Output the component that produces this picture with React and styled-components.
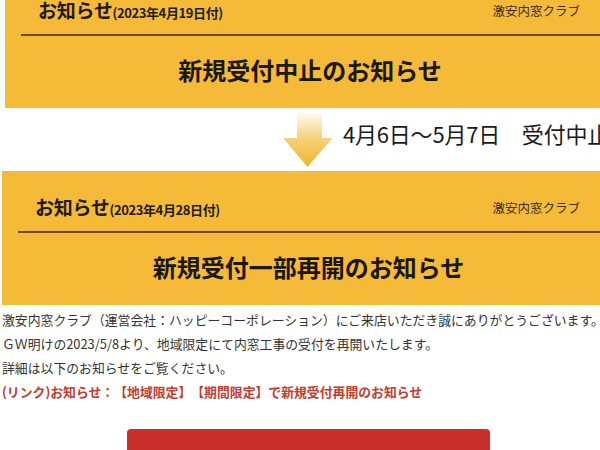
import React from "react";
import styled, { createGlobalStyle } from "styled-components";

const GlobalStyle = createGlobalStyle`
  html, body {
    margin: 0;
    padding: 0;
    background: #fff;
    overflow: hidden;
  }
  body {
    width: 600px;
    height: 450px;
    font-family: "Noto Sans CJK JP", "Noto Sans", sans-serif;
    color: #222;
    text-spacing-trim: space-all;
  }
`;

const Page = styled.div`
  width: 600px;
  height: 450px;
  overflow: hidden;
`;

const Panel = styled.section`
  margin-left: ${(p) => p.$inset}px;
  margin-top: ${(p) => p.$top || 0}px;
  height: 134px;
  background: #f5ba37;
  box-sizing: border-box;
  padding-top: 27px;
`;

const PanelHead = styled.div`
  display: flex;
  justify-content: space-between;
  align-items: center;
  height: 20px;
  padding: 0 20px 0 33px;
`;

const HeadTitle = styled.div`
  font-size: 19px;
  font-weight: 700;
  color: #1e1a12;
  line-height: 20px;
  letter-spacing: -0.3px;
  small {
    font-size: 13px;
    letter-spacing: -0.4px;
  }
`;

const Club = styled.div`
  font-size: 12.5px;
  color: #3a3020;
  line-height: 20px;
`;

const Rule = styled.hr`
  margin: 13px 0 0 16px;
  border: none;
  border-top: 2px solid #6a4c10;
  height: 0;
`;

const Notice = styled.h2`
  margin: 19px 0 0;
  padding-left: 15px;
  text-align: center;
  font-size: 24px;
  line-height: 30px;
  font-weight: 700;
  color: #1a1710;
  white-space: nowrap;
`;

const Between = styled.div`
  display: flex;
  align-items: flex-start;
  gap: 10px;
  height: 63px;
  padding-left: 283px;
  box-sizing: border-box;
  white-space: nowrap;
  overflow: hidden;
`;

const ArrowSvg = styled.svg`
  flex-shrink: 0;
  margin-top: 5px;
`;

const Period = styled.div`
  flex-shrink: 0;
  margin-top: 11px;
  font-size: 22px;
  line-height: 28px;
  color: #1b1b1b;
  letter-spacing: -0.2px;
`;

const Body = styled.div`
  padding: 3px 0 0 2px;
  font-size: 12.85px;
  line-height: 24px;
  color: #333;
  white-space: nowrap;
`;

const Line = styled.p`
  margin: 0;
  color: ${(p) => (p.$link ? "#c53b2d" : "#333")};
  font-weight: ${(p) => (p.$link ? 700 : 400)};
`;

const RedButton = styled.div`
  margin: 25px 0 0 125px;
  width: 363px;
  height: 44px;
  box-sizing: border-box;
  padding-top: 16px;
  background: #c9302b;
  border-radius: 4px;
  color: #fff;
  font-weight: 700;
  font-size: 15px;
  text-align: center;
`;

const Arrow = () => (
  <ArrowSvg width="50" height="55" viewBox="0 0 50 55">
    <defs>
      <linearGradient id="arr" x1="0" y1="0" x2="0" y2="1">
        <stop offset="0" stopColor="#fefaf0" />
        <stop offset="0.5" stopColor="#f6cf74" />
        <stop offset="1" stopColor="#f0b42e" />
      </linearGradient>
    </defs>
    <path d="M14 0 H39 V25 H49.5 L24.5 54 L0 25 H14 Z" fill="url(#arr)" />
  </ArrowSvg>
);

const NoticeBlock = ({ inset, top, date, title }) => (
  <Panel $inset={inset} $top={top}>
    <PanelHead>
      <HeadTitle>
        お知らせ<small>({date}付)</small>
      </HeadTitle>
      <Club>激安内窓クラブ</Club>
    </PanelHead>
    <Rule />
    <Notice>{title}</Notice>
  </Panel>
);

export default function App() {
  return (
    <Page>
      <GlobalStyle />
      <NoticeBlock inset={5} top={-26} date="2023年4月19日" title="新規受付中止のお知らせ" />
      <Between>
        <Arrow />
        <Period>4月6日〜5月7日　受付中止</Period>
      </Between>
      <NoticeBlock inset={2} date="2023年4月28日" title="新規受付一部再開のお知らせ" />
      <Body>
        <Line>激安内窓クラブ（運営会社：ハッピーコーポレーション）にご来店いただき誠にありがとうございます。</Line>
        <Line>ＧＷ明けの2023/5/8より、地域限定にて内窓工事の受付を再開いたします。</Line>
        <Line>詳細は以下のお知らせをご覧ください。</Line>
        <Line $link>(リンク)お知らせ：【地域限定】【期間限定】で新規受付再開のお知らせ</Line>
        <RedButton>【地域限定】新規受付再開のお知らせ</RedButton>
      </Body>
    </Page>
  );
}
